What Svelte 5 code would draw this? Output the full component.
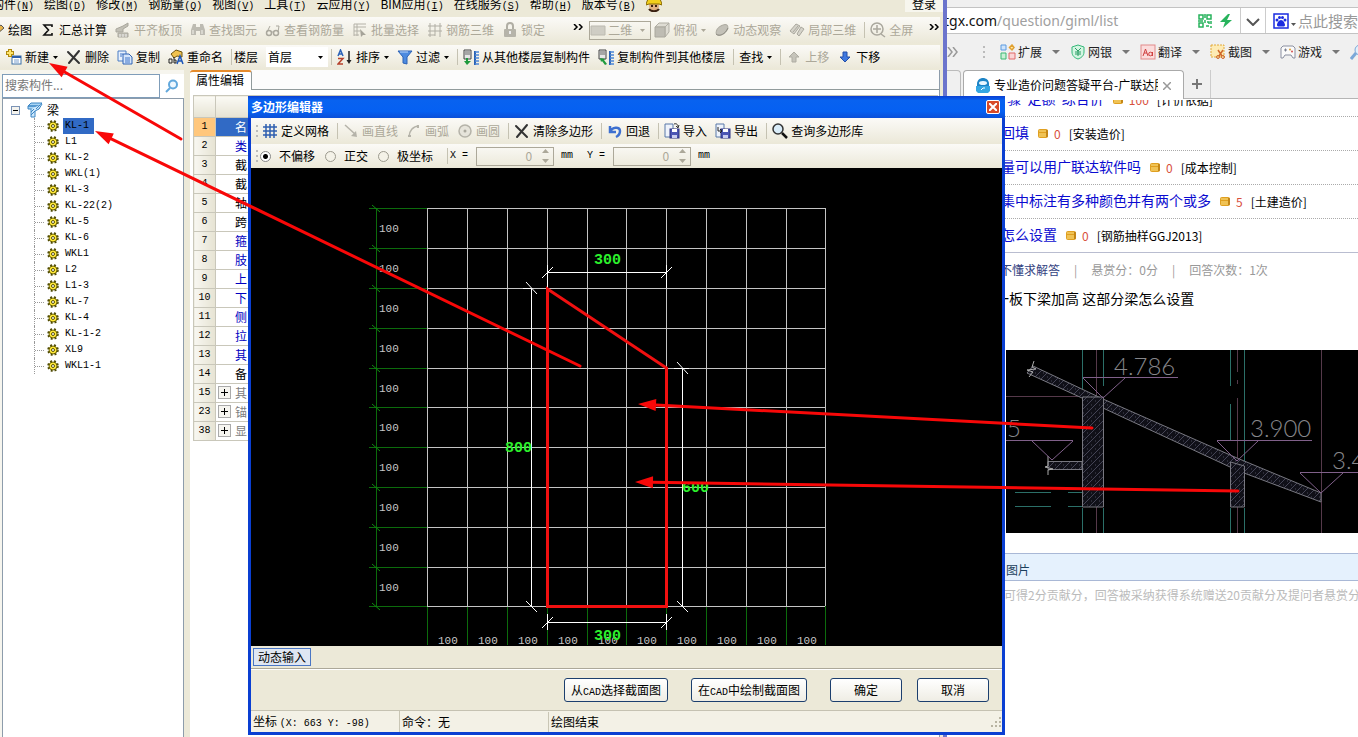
<script>
	const menus = [
		['构件', 'N'],
		['绘图', 'D'],
		['修改', 'M'],
		['钢筋量', 'Q'],
		['视图', 'V'],
		['工具', 'T'],
		['云应用', 'Y'],
		['BIM应用', 'I'],
		['在线服务', 'S'],
		['帮助', 'H'],
		['版本号', 'B']
	];

	const drawTools = [
		{ icon: 'pencil', label: '绘图' },
		{ icon: 'sigma', label: '汇总计算' },
		{ icon: 'align', label: '平齐板顶', disabled: true },
		{ icon: 'binoculars', label: '查找图元', disabled: true },
		{ icon: 'glasses', label: '查看钢筋量', disabled: true },
		{ icon: 'batch', label: '批量选择', disabled: true },
		{ icon: 'rebar', label: '钢筋三维', disabled: true },
		{ icon: 'lock', label: '锁定', disabled: true }
	];

	const viewTools = [
		{ icon: 'cube', label: '俯视', disabled: true, menu: true },
		{ icon: 'orbit', label: '动态观察', disabled: true },
		{ icon: 'local', label: '局部三维', disabled: true },
		{ sep: true },
		{ icon: 'full', label: '全屏', disabled: true }
	];

	const editTools = [
		{ icon: 'new', label: '新建', menu: true },
		{ icon: 'cross', label: '删除' },
		{ icon: 'copy', label: '复制' },
		{ icon: 'rename', label: '重命名' }
	];

	const partTools = [
		{ sep: true },
		{ icon: 'sort', label: '排序', menu: true },
		{ icon: 'funnel', label: '过滤', menu: true },
		{ sep: true },
		{ icon: 'floorIn', label: '从其他楼层复制构件' },
		{ icon: 'floorOut', label: '复制构件到其他楼层' },
		{ sep: true },
		{ label: '查找', menu: true },
		{ sep: true },
		{ icon: 'up', label: '上移', disabled: true },
		{ icon: 'down', label: '下移' }
	];

	const polygonTools = [
		{ icon: 'mesh', label: '定义网格' },
		{ sep: true },
		{ icon: 'line', label: '画直线', disabled: true },
		{ icon: 'arc', label: '画弧', disabled: true },
		{ icon: 'circle', label: '画圆', disabled: true },
		{ sep: true },
		{ icon: 'cross', label: '清除多边形' },
		{ sep: true },
		{ icon: 'undo', label: '回退' },
		{ sep: true },
		{ icon: 'import', label: '导入' },
		{ icon: 'export', label: '导出' },
		{ sep: true },
		{ icon: 'magnifier', label: '查询多边形库' }
	];

	const beams = ['KL-1', 'L1', 'KL-2', 'WKL(1)', 'KL-3', 'KL-22(2)', 'KL-5', 'KL-6', 'WKL1', 'L2', 'L1-3', 'KL-7', 'KL-4', 'KL-1-2', 'XL9', 'WKL1-1'];

	const properties = [
		[1, '名', 'current'],
		[2, '类', 'blue'],
		[3, '截', ''],
		[4, '截', ''],
		[5, '轴', ''],
		[6, '跨', ''],
		[7, '箍', 'blue'],
		[8, '肢', 'blue'],
		[9, '上', 'blue'],
		[10, '下', 'blue'],
		[11, '侧', 'blue'],
		[12, '拉', 'blue'],
		[13, '其', 'blue'],
		[14, '备', ''],
		[15, '其', 'group'],
		[23, '锚', 'group'],
		[38, '显', 'group']
	];

	const bookmarks = [
		['ext', '扩展'],
		['bank', '网银'],
		['translate', '翻译'],
		['shot', '截图'],
		['game', '游戏']
	];

	const questions = [
		['\u00a0\u00a0骤\u00a0 定额\u00a0 综合价', 100, '计价依据'],
		['回填', 0, '安装造价'],
		['量可以用广联达软件吗', 0, '成本控制'],
		['集中标注有多种颜色并有两个或多', 5, '土建造价'],
		['怎么设置', 0, '钢筋抽样GGJ2013']
	];

	// polygon grid, 10 x 10 cells
	const steps = [...Array(11).keys()];
	const cells = steps.slice(0, 10);
	const gx = (i) => Math.round(176.4 + i * 39.8);
	const gy = (i) => Math.round(40.4 + i * 39.8);

	const arrows = [
		[181, 139, 49, 63],
		[580, 366, 95, 131],
		[1092, 428, 638, 404],
		[1238, 491, 635, 482]
	].map(([x1, y1, x2, y2]) => {
		const len = Math.hypot(x2 - x1, y2 - y1);
		const ux = (x2 - x1) / len;
		const uy = (y2 - y1) / len;
		const bx = x2 - ux * 18;
		const by = y2 - uy * 18;
		return { x1, y1, bx, by, head: `${x2},${y2} ${bx - uy * 6},${by + ux * 6} ${bx + uy * 6},${by - ux * 6}` };
	});

	let mode = 'none';
</script>

{#snippet icon(name)}
	<svg class="icon" width="16" height="16" viewBox="0 0 16 16" fill="none" aria-hidden="true">
		{#if name === 'pencil'}
			<path d="M3 13l2-5 7-5 3 3-7 6z" fill="#e8b54a" stroke="#555" /><path d="M3 13l2-5 3 4z" fill="#333" />
		{:else if name === 'sigma'}
			<path d="M12 5V3H4l4.500 5L4 13h8v-2" stroke="#111" stroke-width="1.600" />
		{:else if name === 'align'}
			<path d="M1 7l7-3 5-3v3l-5 3v3H1zM3 11h10v4H3z" fill="#c2c0b6" stroke="#a9a79d" /><path d="M5 12v3M8 12v3M11 12v3" stroke="#eee" />
		{:else if name === 'binoculars'}
			<path d="M3 2h3v3h4V2h3l2 6v5h-5V9H6v4H1V8z" fill="#bdbbb2" /><path d="M3 8v4M12 8v4" stroke="#f4f3ec" />
		{:else if name === 'glasses'}
			<circle cx="4" cy="11" r="2.500" stroke="#aaa89e" stroke-width="1.500" /><circle cx="11" cy="11" r="2.500" stroke="#aaa89e" stroke-width="1.500" /><path d="M2 10l3-6M13 10l1-6h-3M6 10h3" stroke="#aaa89e" />
		{:else if name === 'batch'}
			<path d="M2 2h12M2 5h12M2 9h6M2 13h5M2 2v12M5 2v12" stroke="#b4b2a8" /><path d="M8 7l6 6-3 0-2 2z" fill="#a5a399" />
		{:else if name === 'rebar'}
			<path d="M3 1v14M8 2v12M13 1v14M1 4h14M1 9h14M1 13h7" stroke="#b0aea4" />
		{:else if name === 'lock'}
			<path d="M5 7V4a3 3 0 0 1 6 0v3" stroke="#b0aea4" stroke-width="2" /><rect x="2" y="7" width="12" height="8" rx="1" fill="#b6b4aa" /><path d="M8 9v3" stroke="#eee" stroke-width="2" />
		{:else if name === 'plane'}
			<path d="M1 4h14v9H1z" fill="#cfcdc4" stroke="#bcbab0" />
		{:else if name === 'cube'}
			<path d="M1 5l4-4h10l-4 4zM11 5l4-4v9l-4 5z" fill="#dedcd3" stroke="#b0aea4" /><path d="M1 5h10v10H1z" fill="#bebcb3" stroke="#aaa89e" />
		{:else if name === 'orbit'}
			<ellipse cx="8" cy="8" rx="7" ry="4" transform="rotate(-40 8 8)" fill="#c3c1b8" stroke="#aeaca2" /><path d="M2 12c4 3 9 0 12-6" stroke="#8f8d84" />
		{:else if name === 'local'}
			<path d="M1 9l6-7 4 2-6 8zM8 12l4-7 3 2-5 7z" fill="#d5d3ca" stroke="#aaa89e" /><path d="M4 10l5-6" stroke="#aaa89e" />
		{:else if name === 'full'}
			<circle cx="7" cy="7" r="6" stroke="#aaa89e" stroke-width="1.500" /><path d="M7 3v8M3 7h8M11 12l4 3" stroke="#aaa89e" stroke-width="1.500" />
		{:else if name === 'new'}
			<rect x="6" y="7" width="9" height="8" fill="#fff" stroke="#3a6ea5" /><path d="M6 8h9" stroke="#2d5fae" stroke-width="2" /><path d="M8 11h5M8 13h5" stroke="#7aa0cf" /><path d="M4 0v8M0 4h8" stroke="#b08a10" stroke-width="4" /><path d="M4 1v6M1 4h6" stroke="#ffe46b" stroke-width="2" />
		{:else if name === 'cross'}
			<path d="M2 3l11 11M13 2L3 14" stroke="#333" stroke-width="2" stroke-linecap="round" />
		{:else if name === 'copy'}
			<path d="M1 2h8v10H1z" fill="#e8f1fd" stroke="#4a7cc4" /><path d="M6 5h6l3 3v7H6z" fill="#d5e5fb" stroke="#2f62b4" /><path d="M3 5h3M3 7h2M8 9h5M8 11h5M8 13h5" stroke="#3f74c8" />
		{:else if name === 'rename'}
			<path d="M3 5l5-4 6 2v5L9 7l-3 2z" fill="#f0c24f" stroke="#6d5410" /><path d="M1 10h3v4H1zM6 8v6M6 11h2v3H6" stroke="#222" /><path d="M9 15l3-8 3 8M10 12h4" stroke="#1d56b8" stroke-width="1.500" />
		{:else if name === 'sort'}
			<path d="M1 7l2.500-6L6 7M2 5h3" stroke="#2c63b8" stroke-width="1.500" /><path d="M1 9.500h5L1 15h5" stroke="#b5412c" stroke-width="1.500" /><path d="M12 2v11" stroke="#222" stroke-width="1.500" /><path d="M9.500 11h5L12 15z" fill="#222" />
		{:else if name === 'funnel'}
			<path d="M1 2h14L10 8v7l-4-1V8z" fill="#4d8be0" stroke="#2c62b5" /><path d="M3 3h8" stroke="#bcd7fa" />
		{:else if name === 'floorIn' || name === 'floorOut'}
			<path d="M1 1h7v9H1z" fill="#e6e6e6" stroke="#444" /><path d="M2 3h5M2 5h5" stroke="#666" />
			<path d="M12 2v14" stroke="#2a62b4" stroke-width="2" /><path d="M12 3h4M12 6h4M12 9h4M12 12h4M12 15h4" stroke="#4c86d6" stroke-width="1.500" />
			{#if name === 'floorIn'}
				<path d="M5 9v3h3l-4 4-3-4h2V9z" fill="#1f9a3c" />
			{:else}
				<path d="M2 9l5 1-1 1 3 4-2 1-3-4-1 1z" fill="#1f9a3c" />
			{/if}
		{:else if name === 'up'}
			<path d="M8 3l5 5h-3v5H6V8H3z" fill="#c6c4ba" stroke="#aeaca2" />
		{:else if name === 'down'}
			<path d="M8 13l5-5h-3V3H6v5H3z" fill="#3f79e0" stroke="#244fa8" />
		{:else if name === 'mesh'}
			<path d="M4 1v14M8 1v14M12 1v14M1 4h14M1 8h14M1 12h14" stroke="#2f5fb0" stroke-width="1.500" />
		{:else if name === 'line'}
			<path d="M2 2l10 9" stroke="#b5b3a9" stroke-width="1.500" /><path d="M14 14l-6-1 5-5z" fill="#b5b3a9" />
		{:else if name === 'arc'}
			<path d="M3 14C3 8 7 3 13 3" stroke="#b5b3a9" stroke-width="1.500" /><path d="M2 13h3M12 2v3" stroke="#b5b3a9" stroke-width="2" />
		{:else if name === 'circle'}
			<circle cx="8" cy="8" r="6" fill="#e6e4db" stroke="#b5b3a9" stroke-width="1.500" /><circle cx="8" cy="8" r="1.500" fill="#aaa89e" />
		{:else if name === 'undo'}
			<path d="M3 3v6h6M3 9c2-5 10-6 10-1 0 3-2 5-4 6" stroke="#3e70d0" stroke-width="2.500" />
		{:else if name === 'import' || name === 'export'}
			<path d="M1 1h8v13H1z" fill="#eef3fb" stroke="#5878a8" />
			<rect x="6" y="6" width="9" height="9" fill="#4b55b4" stroke="#2c3382" /><path d="M8 6h5v3H8z" fill="#fff" /><path d="M8 12h5v3H8z" fill="#c9cdf0" />
			{#if name === 'import'}
				<path d="M10 1c3-1 4 1 4 3M12 3l2 2 1-3" stroke="#333" />
			{:else}
				<path d="M3 4v4h4M5 6l2 2-2 2" stroke="#222" />
			{/if}
		{:else if name === 'magnifier'}
			<circle cx="6" cy="6" r="5" fill="#d9ecf8" stroke="#333" stroke-width="1.500" /><path d="M10 10l5 5" stroke="#111" stroke-width="2.500" />
		{:else if name === 'beam'}
			<path d="M1 4l3-3h11l-3 3zM1 4h11v3H1z" fill="#a9d5f5" stroke="#3c86c4" /><path d="M4 7v8h4V9l4-2 3-5" fill="#cfe8fb" stroke="#3c86c4" /><path d="M4 13l4-4M4 10l3-3M9 7l4-4" stroke="#3c86c4" />
		{:else if name === 'gear'}
			<circle cx="8" cy="8" r="4" fill="#ffe838" stroke="#6b6200" /><circle cx="8" cy="8" r="5" stroke="#4d4800" stroke-width="1.500" stroke-dasharray="2 2" /><circle cx="8" cy="8" r="1.500" fill="#fff" stroke="#5a5300" />
		{:else if name === 'ext'}
			<path d="M1 1h5v5H1z" fill="#cfe4fb" stroke="#5a9ae0" /><path d="M1 9h5v6H1z" fill="#c9f0d6" stroke="#3db873" /><path d="M9 9h6v6H9z" fill="#fbd5d5" stroke="#e06a6a" /><path d="M12 1l2 2.500L12 6 9.500 3.500z" fill="#ffe9a8" stroke="#e0a030" stroke-width="1.500" />
		{:else if name === 'bank'}
			<path d="M8 1l6 2v5c0 4-3 6-6 7-3-1-6-3-6-7V3z" fill="#d3f5e2" stroke="#34b878" /><path d="M5 4l3 3 3-3M5 8h6M5 10h6M8 7v5" stroke="#2b9c64" />
		{:else if name === 'translate'}
			<rect x="1" y="1" width="14" height="14" fill="#fbdcdc" stroke="#e28a8a" /><path d="M3 12l2.500-7L8 12M4 9h3" stroke="#cf4040" /><circle cx="10.500" cy="10" r="1.800" stroke="#cf4040" /><path d="M12.500 8v4" stroke="#cf4040" />
		{:else if name === 'shot'}
			<rect x="1" y="1" width="13" height="12" fill="#fdebb5" stroke="#e2a93a" stroke-dasharray="2 1" /><path d="M8 6l4 6M13 6l-4 6" stroke="#d0682a" stroke-width="1.500" /><circle cx="8" cy="13" r="1.500" stroke="#d0682a" /><circle cx="13" cy="13" r="1.500" stroke="#d0682a" />
		{:else if name === 'game'}
			<path d="M3 2h10l2 2v10h-2l-2-3H5l-2 3H1V4z" fill="#fafafa" stroke="#8a8fa0" /><path d="M4 6h3M5.500 4.500v3" stroke="#7a7f90" /><circle cx="10" cy="5.500" r="1" fill="#e0a030" /><circle cx="12" cy="7.500" r="1" fill="#d65050" />
		{/if}
	</svg>
{/snippet}

{#snippet caret()}
	<svg class="caret" width="5" height="3" viewBox="0 0 5 3" aria-hidden="true"><path d="M0 0h5L2.500 3z" fill="currentColor" /></svg>
{/snippet}

{#snippet tools(list)}
	{#each list as tool}
		{#if tool.sep}
			<span class="sep"></span>
		{:else}
			<button class="tool" disabled={tool.disabled}>
				{#if tool.icon}{@render icon(tool.icon)}{/if}
				<span>{tool.label}</span>
				{#if tool.menu}{@render caret()}{/if}
			</button>
		{/if}
	{/each}
{/snippet}

<div class="desktop">
	<main class="app">
		<nav class="menubar">
			{#each menus as [name, key]}
				<button>{name}<span class="key">(<u>{key}</u>)</span></button>
			{/each}
			<svg width="16" height="14" viewBox="0 0 16 14" aria-hidden="true">
				<circle cx="8" cy="8" r="5" fill="#e2b080" />
				<path d="M0 7C1 1 4-2 8-2s7 3 8 9l-3-1H3z" fill="#f2cf1c" stroke="#8a6a00" />
				<path d="M5 8h2M9 8h2M3 11c2 3 8 3 10 0" stroke="#3a2010" stroke-width="2" fill="none" />
			</svg>
			<button class="login">登录</button>
		</nav>

		<div class="toolbar draw">
			{@render tools(drawTools)}
			<button class="more" aria-label="更多绘图工具"><svg width="10" height="6" viewBox="0 0 10 6"><path d="M1 0l3 3-3 3M6 0l3 3-3 3" stroke="#000" stroke-width="1.500" fill="none" /></svg></button>
			<span class="combo view">
				{@render icon('plane')}
				<select disabled aria-label="视图"><option>二维</option></select>
				{@render caret()}
			</span>
			{@render tools(viewTools)}
			<button class="more" aria-label="更多视图工具"><svg width="10" height="6" viewBox="0 0 10 6"><path d="M1 0l3 3-3 3M6 0l3 3-3 3" stroke="#000" stroke-width="1.500" fill="none" /></svg></button>
		</div>

		<div class="toolbar edit">
			{@render tools(editTools)}
			<span class="sep tight"></span>
			<label for="floor">楼层</label>
			<span class="combo floor">
				<select id="floor"><option>首层</option></select>
				{@render caret()}
			</span>
			{@render tools(partTools)}
		</div>

		<div class="workspace">
			<aside class="parts">
				<div class="search">
					<input type="text" placeholder="搜索构件..." aria-label="搜索构件" />
					<button aria-label="搜索">
						<svg width="14" height="14" viewBox="0 0 14 14"><circle cx="8" cy="5.500" r="4" fill="#eef7fe" stroke="#62a8dc" stroke-width="2" /><path d="M5 9l-4 4" stroke="#62a8dc" stroke-width="2" /></svg>
					</button>
				</div>
				<div class="tree">
					<div class="root">
						<svg class="toggle" width="9" height="9" viewBox="0 0 9 9"><rect x=".5" y=".5" width="8" height="8" fill="#f4f3ee" stroke="#7b93b5" /><path d="M2 4.500h5" stroke="#000" /></svg>
						{@render icon('beam')}
						<span>梁</span>
					</div>
					<ul>
						{#each beams as beam, i}
							<li>
								{@render icon('gear')}
								<span class="beam" class:selected={i === 0}>{beam}</span>
							</li>
						{/each}
					</ul>
				</div>
			</aside>

			<section class="props">
				<div class="tabs"><button>属性编辑</button></div>
				<table>
					<thead>
						<tr><th></th><th></th></tr>
					</thead>
					<tbody>
						{#each properties as [n, name, kind]}
							<tr class={kind}>
								<th>{n}</th>
								<td>
									{#if kind === 'group'}
										<button class="plus" aria-label="展开"><svg width="13" height="13" viewBox="0 0 13 13"><rect x=".5" y=".5" width="12" height="12" fill="#f6f5f0" stroke="#aaa" /><path d="M3 6.500h7M6.500 3v7" stroke="#000" /></svg></button>
									{/if}
									<span>{name}</span>
								</td>
							</tr>
						{/each}
					</tbody>
				</table>
			</section>
		</div>
	</main>

	<section class="browser">
		<div class="address">
			<a href="/question/giml/list"><b>tgx.com</b>/question/giml/list</a>
			<svg width="14" height="14" viewBox="0 0 14 14" aria-hidden="true">
				<path d="M1 1h4v4H1zM9 1h4v4H9zM1 9h4v4H1z" fill="none" stroke="#27b35c" stroke-width="1.500" /><path d="M7 0v4M7 6v3M9 8h2v2M13 7v3M8 12h3M12 13h2M0 7h5" stroke="#27b35c" stroke-width="1.500" fill="none" />
			</svg>
			<svg width="14" height="14" viewBox="0 0 14 14" aria-hidden="true"><path d="M9 0L1 8h5l-2 6 9-8H8l3-6z" fill="#27b35c" /></svg>
			<button class="drop" aria-label="历史">
				<svg width="14" height="8" viewBox="0 0 14 8"><path d="M1 1l6 6 6-6" fill="none" stroke="#555" stroke-width="2" /></svg>
			</button>
			<svg width="16" height="16" viewBox="0 0 16 16" aria-hidden="true">
				<rect x="1" y="1" width="14" height="14" fill="#fff" stroke="#1a2be0" stroke-width="1.500" />
				<g fill="#1a2be0"><circle cx="4" cy="7" r="1.500" /><circle cx="6.500" cy="4.500" r="1.500" /><circle cx="9.500" cy="4.500" r="1.500" /><circle cx="12" cy="7" r="1.500" /><path d="M8 7c2 0 4 3 4 5s-2 1.500-4 1.500S4 14 4 12s2-5 4-5z" /></g>
			</svg>
			<svg class="pick" width="5" height="3" viewBox="0 0 5 3" aria-hidden="true"><path d="M0 0h5L2.500 3z" fill="#555" /></svg>
			<input type="text" placeholder="点此搜索" aria-label="搜索" />
		</div>
		<div class="bookmarks">
			<svg width="11" height="10" viewBox="0 0 11 10" aria-hidden="true"><path d="M1 0l4 5-4 5M6 0l4 5-4 5" fill="none" stroke="#999" stroke-width="1.500" /></svg>
			<span class="dots"></span>
			{#each bookmarks as [name, label]}
				<button>{@render icon(name)}<span>{label}</span><svg class="tri" width="8" height="4" viewBox="0 0 8 4"><path d="M0 0h8L4 4z" fill="#777" /></svg></button>
			{/each}
			<svg class="brush" width="16" height="16" viewBox="0 0 16 16" aria-hidden="true"><circle cx="10" cy="6" r="5" fill="#e3f0fc" stroke="#7ba8d8" /><path d="M6 9l-5 6" stroke="#7ba8d8" stroke-width="3" /></svg>
		</div>
		<div class="pagetabs">
			<span class="prev"></span>
			<div class="pagetab">
				<svg width="16" height="16" viewBox="0 0 16 16" aria-hidden="true"><path d="M2 7C2-1 14-1 14 7v3H2z" fill="#1d84c6" /><ellipse cx="8" cy="6" rx="4" ry="2" fill="#e8f6ff" /><path d="M1 9h14v5l-2 2H3l-2-2z" fill="#35a6e2" /><path d="M6 13l2-2h2" stroke="#fff" fill="none" /></svg>
				<span class="title">专业造价问题答疑平台-广联达服务新干线</span>
				<button aria-label="关闭标签页"><svg width="8" height="8" viewBox="0 0 8 8"><path d="M0 0l8 8M8 0L0 8" stroke="#999" stroke-width="1.500" /></svg></button>
			</div>
			<button class="add" aria-label="新标签页"><svg width="10" height="10" viewBox="0 0 10 10"><path d="M5 0v10M0 5h10" stroke="#777" stroke-width="2" /></svg></button>
		</div>

		<div class="page">
			<ul class="questions">
				{#each questions as [title, score, tag]}
					<li>
						<a href="#question">{title}</a>
						<svg width="12" height="11" viewBox="0 0 12 11" aria-hidden="true"><rect x="1" y="1" width="10" height="9" rx="2" fill="#e0a021" /><path d="M2 3h7M2 6h7M2 8h7" stroke="#ffe58a" /><path d="M10 2v7" stroke="#a86d0c" /></svg>
						<span class="score">{score}</span>
						<span>[{tag}]</span>
					</li>
				{/each}
			</ul>
			<p class="meta"><a href="#user">不懂求解答</a><span>|</span><span>悬赏分：0分</span><span>|</span><span>回答次数：1次</span></p>
			<p class="subject">一板下梁加高 这部分梁怎么设置</p>

			<svg class="section" role="img" aria-label="梁板剖面图">
				<defs>
					<pattern id="hatch" width="8" height="8" patternUnits="userSpaceOnUse">
						<rect width="8" height="8" fill="#101018" />
						<path d="M-1 9L9-1M1 3h1M5 7h1" stroke="#454556" />
					</pattern>
				</defs>
				<g fill="none" stroke="#2b6f68">
					<path d="M76.500 0v47M97.500 0v36M76.500 158v25M97.500 158v25M224.500 0v36M224.500 54v36M238.500 0v114M224.500 158v25M238.500 158v25" />
					<path d="M9 142.500h36M62 142.500h14M9 156.500h36M62 156.500h14" />
				</g>
				<g fill="none" stroke="#55394a">
					<path d="M90.500 0v183M231.500 0v22M231.500 30v4M231.500 48v135M315.500 0v183M0 46.500h76" />
				</g>
				<path d="M27 16L97 49 231 108 315 143V152L238 123 224 117 97 58 76 48 21 23z" fill="url(#hatch)" stroke="#77777f" />
				<path d="M76.500 47H97.500V157H76.500zM224.500 112L238.500 116V157H224.500zM42 111.500h34v8H42z" fill="url(#hatch)" stroke="#77777f" />
				<path d="M28 11l-2 6 4 2-9 1 6 2-4 5M42 106v10l-3 1 8 2-5 1v5" fill="none" stroke="#aaa" />
				<path d="M77 27.500h95M77 28L97 48 119 28M211 90.500h95M211 91L231 111 252 91M294 122.500h90M294 123L315 143 337 123M0 90.500h67M26 91L46 110 67 91" fill="none" stroke="#80608a" />
				<text x="108" y="25">4.786</text>
				<text x="244" y="87">3.900</text>
				<text x="326" y="119">3.4</text>
				<text x="1" y="87">5</text>
			</svg>

			<div class="upload">图片</div>
			<p class="hint">可得2分贡献分，回答被采纳获得系统赠送20贡献分及提问者悬赏分</p>
		</div>
	</section>

	<section class="dialog" role="dialog" aria-label="多边形编辑器">
		<header>
			<h1>多边形编辑器</h1>
			<button class="close" aria-label="关闭"><svg width="8" height="8" viewBox="0 0 8 8"><path d="M0 0l8 8M8 0L0 8" stroke="#fff" stroke-width="2" /></svg></button>
		</header>
		<div class="toolbar polygon"><span class="dots"></span>{@render tools(polygonTools)}</div>
		<div class="toolbar offset">
			<span class="dots"></span>
			<label class="radio"><input type="radio" value="none" bind:group={mode} />不偏移</label>
			<label class="radio"><input type="radio" value="ortho" bind:group={mode} />正交</label>
			<label class="radio"><input type="radio" value="polar" bind:group={mode} />极坐标</label>
			<span class="sep"></span>
			{#each ['X', 'Y'] as axis}
				<label class="axis" for="off{axis}">{axis} =</label>
				<span class="number">
					<input id="off{axis}" type="text" value="0" disabled />
					<svg width="7" height="14" viewBox="0 0 7 14" aria-hidden="true"><path d="M0 4h7L3.500 0zM0 10h7l-3.500 4z" fill="#aca899" /></svg>
				</span>
				<span class="unit">mm</span>
			{/each}
		</div>

		<svg class="canvas" role="img" aria-label="多边形截面">
			<g shape-rendering="crispEdges">
				<g stroke="#0c6b0c">
					<path d="M125.500 40V439" />
					{#each steps as i}
						<path d="M118 {gy(i) + 0.5}H176M{gx(i) + 0.5} {gy(10)}V477" />
					{/each}
				</g>
				<g stroke="#c4c4c4">
					{#each steps as i}
						<path d="M{gx(0)} {gy(i) + 0.5}H{gx(10)}M{gx(i) + 0.5} {gy(0)}V{gy(10)}" />
					{/each}
				</g>
				<path d="M296.500 97V120M296 104.500H416M415.500 97V120M280.500 120V438M431.500 200V438M272 120.500h8M423 200.500h15M296.500 446V462M415.500 446V462M296 454.500H416" stroke="#fff" fill="none" />
			</g>
			{#each steps as i}
				<path d="M121 {gy(i) - 3}l8 7" stroke="#0f8a0f" />
			{/each}
			<path d="M291 110l11-11M410 110l11-11M275 114l11 12M426 194l11 12M275 433l11 11M426 433l11 11M291 460l11-11M410 460l11-11" stroke="#fff" fill="none" />
			<g class="ruler">
				{#each cells as i}
					<text x="128" y={gy(i) + 24}>100</text>
					<text x={gx(i) + 11} y="476">100</text>
				{/each}
			</g>
			<g class="dim">
				<text x="343" y="96">300</text>
				<text x="254" y="284">800</text>
				<text x="431" y="324">600</text>
				<text x="343" y="472">300</text>
			</g>
			<path d="M296.500 121L415.500 200V438.500H296.500z" fill="none" stroke="#f01010" stroke-width="3" />
		</svg>

		<div class="dynamic"><button>动态输入</button></div>
		<footer>
			<button>从<span class="mono">CAD</span>选择截面图</button>
			<button>在<span class="mono">CAD</span>中绘制截面图</button>
			<button class="ok">确定</button>
			<button class="cancel">取消</button>
		</footer>
		<div class="status">
			<span class="coords">坐标 <span class="mono">(X: 663 Y: -98)</span></span>
			<span class="command">命令：无</span>
			<span class="state">绘图结束</span>
			<svg width="12" height="12" viewBox="0 0 12 12" aria-hidden="true"><path d="M9 1h2v2H9zM5 5h2v2H5zM9 5h2v2H9zM1 9h2v2H1zM5 9h2v2H5zM9 9h2v2H9z" fill="#b8b4a2" /></svg>
		</div>
	</section>

	<svg class="notes" aria-hidden="true">
		{#each arrows as a}
			<line x1={a.x1} y1={a.y1} x2={a.bx} y2={a.by} stroke="#f80808" stroke-width="3" stroke-linecap="round" />
			<polygon points={a.head} fill="#f80808" />
		{/each}
	</svg>
</div>

<style>
	:global(body) {
		margin: 0;
	}

	.desktop {
		position: relative;
		display: flex;
		min-height: 100vh;
		overflow: hidden;
		font: 12px/16px 'Noto Sans CJK SC', sans-serif;
		color: #000;
		background: #fff;
	}

	button,
	input,
	select {
		margin: 0;
		padding: 0;
		border: 0;
		background: none;
		font: inherit;
		color: inherit;
		white-space: nowrap;
	}

	select {
		appearance: none;
	}

	svg {
		flex: none;
	}

	ul,
	p,
	h1 {
		margin: 0;
		padding: 0;
		list-style: none;
	}

	a {
		text-decoration: none;
	}

	/* main window */
	.app {
		flex: 0 0 943px;
		display: flex;
		flex-direction: column;
		border-right: 4px solid #6b74cc;
		background: #ece9d8;
		overflow: hidden;
	}

	.menubar {
		display: flex;
		align-items: flex-start;
		gap: 10px;
		height: 21px;
		margin: -4px 0 0 -8px;
	}

	.menubar svg {
		margin-top: 2px;
	}

	.key {
		font: 10px/12px 'Liberation Mono', monospace;
	}

	.login {
		margin-left: auto;
		padding: 0 7px;
		background: #f7f6ee;
	}

	.toolbar {
		display: flex;
		align-items: center;
		margin-right: 3px;
		background: linear-gradient(#fbfaf7, #ebe8d8);
		white-space: nowrap;
	}

	.draw {
		height: 26px;
		margin-bottom: 2px;
	}

	.draw > :global(:first-child) {
		margin-left: -11px;
	}

	.edit {
		height: 24px;
		padding-left: 6px;
	}

	.tool {
		display: flex;
		align-items: center;
		gap: 3px;
		padding-right: 8px;
	}

	.tool:disabled {
		color: #aca899;
	}

	.tool .caret {
		margin-left: 1px;
	}

	.sep {
		flex: none;
		width: 1px;
		height: 16px;
		margin-right: 5px;
		background: #c5c2b2;
	}

	.tight {
		margin-right: 2px;
	}

	.more {
		display: flex;
		height: 16px;
		margin-left: 8px;
		padding-top: 2px;
	}

	.more:not(:last-child) {
		margin-left: 20px;
	}

	.combo {
		position: relative;
		flex: none;
		display: flex;
		align-items: center;
		width: 62px;
	}

	.combo select {
		flex: 1;
		padding-left: 2px;
		color: inherit;
		opacity: 1;
	}

	.combo .caret {
		position: absolute;
		right: 5px;
	}

	.view {
		box-sizing: border-box;
		height: 19px;
		margin: 0 3px 0 6px;
		border: 1px solid #aca899;
		color: #aca899;
	}

	.floor {
		height: 20px;
		margin: 0 3px 0 8px;
		background: #fff;
	}

	.workspace {
		flex: 1;
		display: flex;
		margin-top: 1px;
	}

	.parts {
		display: flex;
		flex-direction: column;
		width: 182px;
		padding: 4px 0 0 2px;
		background: #f6f5ee;
	}

	.search {
		display: flex;
		height: 24px;
	}

	.search input {
		box-sizing: border-box;
		width: 158px;
		border: 1px solid #7f9db9;
		padding: 0 0 3px 2px;
		background: #fff;
	}

	.search input::placeholder {
		color: #777;
		opacity: 1;
	}

	.search button {
		flex: 1;
		display: grid;
		place-items: center;
		background: #fff;
	}

	.tree {
		flex: 1;
		padding: 3px 0 0 8px;
		border: 1px solid #8d9cab;
		border-width: 1px 1px 0;
		background: #fff;
	}

	.root {
		display: flex;
		align-items: center;
		height: 16px;
	}

	.root .icon {
		margin: 0 4px 0 7px;
	}

	.tree ul {
		margin-left: 23px;
	}

	.tree li {
		display: flex;
		align-items: center;
		height: 16px;
		border-left: 1px dotted #999;
	}

	.tree li::before {
		content: '';
		width: 9px;
		margin-right: 1px;
		border-top: 1px dotted #999;
	}

	.beam {
		margin-left: 2px;
		padding: 0 2px;
		font: 10px/16px 'Liberation Mono', monospace;
	}

	.selected {
		padding-right: 5px;
		background: #316ac5;
	}

	.props {
		flex: 1;
		margin: 0 3px 0 6px;
		background: #fff;
		border-right: 1px solid #8d9cab;
	}

	.tabs {
		height: 19px;
		border-bottom: 1px solid #919b9c;
		background: #fcfcfc;
	}

	.tabs button {
		height: 20px;
		padding: 0 7px 2px 6px;
		border: 1px solid #919b9c;
		border-width: 2px 1px 0 0;
		border-top-color: #e68b2c;
		border-radius: 3px 3px 0 0;
		background: #fff;
		line-height: 16px;
	}

	table {
		width: calc(100% - 4px);
		margin: 5px 0 0 3px;
		border-collapse: collapse;
		table-layout: fixed;
		border: 1px solid #b5b5a8;
	}

	th,
	td {
		box-sizing: border-box;
		height: 19px;
		padding: 0;
		border: 1px solid #c9c7ba;
		line-height: 16px;
		font-weight: normal;
	}

	thead th {
		height: 22px;
		background: linear-gradient(#fbfaf5, #e6e3d3);
	}

	th:first-child {
		width: 22px;
	}

	tbody th {
		background: linear-gradient(90deg, #f8f7f1, #e6e3d3);
		font-family: 'Liberation Mono', monospace;
		font-size: 10px;
	}

	td {
		position: relative;
	}

	td span {
		padding-left: 19px;
	}

	.plus {
		position: absolute;
		left: 2px;
		top: 2px;
		display: flex;
	}

	.blue td {
		color: #0000c0;
	}

	.group td {
		color: #808080;
	}

	.current th {
		background: #ffc77d;
	}

	.current td {
		background: #316ac5;
		color: #fff;
	}

	/* browser window */
	.browser {
		flex: 1;
		display: flex;
		flex-direction: column;
		min-width: 0;
		background: #f0f0f0;
		overflow: hidden;
	}

	.address {
		display: flex;
		align-items: center;
		gap: 7px;
		height: 25px;
		margin-top: 7px;
		border: 1px solid #c3c3c3;
		border-width: 1px 0;
		background: #fff;
	}

	.address a {
		flex: 1;
		margin-left: -3px;
		font: 14px/20px 'Noto Sans', sans-serif;
		color: #a0a0a0;
	}

	.address b {
		font-weight: normal;
		color: #111;
	}

	.drop {
		align-self: stretch;
		width: 26px;
		border: 1px solid #ccc;
		border-width: 0 1px;
	}

	.pick {
		margin: 8px -5px 0;
	}

	.address input {
		width: 60px;
		font-size: 15px;
	}

	.address input::placeholder {
		color: #999;
		opacity: 1;
	}

	.bookmarks {
		display: flex;
		align-items: center;
		height: 36px;
		white-space: nowrap;
	}

	.bookmarks button {
		flex: none;
		display: flex;
		align-items: center;
		width: 70px;
		color: #222;
	}

	.bookmarks button span {
		margin: 0 10px 0 2px;
	}

	.dots {
		flex: none;
		width: 2px;
		height: 13px;
		background: repeating-linear-gradient(#bbb 0 2px, transparent 2px 5px);
	}

	.bookmarks .dots {
		margin: 0 15px 0 25px;
	}

	.pagetabs {
		display: flex;
		align-items: stretch;
		height: 28px;
		border-bottom: 1px solid #b5b5b5;
	}

	.prev {
		width: 13px;
		margin-right: 2px;
		border: 1px solid #bbb;
		border-width: 1px 1px 0 0;
		border-radius: 0 4px 0 0;
	}

	.pagetab {
		display: flex;
		align-items: center;
		width: 208px;
		margin-bottom: -1px;
		padding-left: 11px;
		border: 1px solid #aaa;
		border-bottom: 0;
		border-radius: 4px 4px 0 0;
		background: #fff;
	}

	.title {
		width: 164px;
		margin: 0 5px 0 3px;
		overflow: hidden;
		white-space: nowrap;
	}

	.add {
		width: 27px;
		border-right: 1px solid #ccc;
	}

	.page {
		flex: 1;
		background: #fff;
	}

	.questions {
		margin-top: -17px;
		clip-path: inset(18px 0 0);
		border-bottom: 1px solid #b9bdd0;
	}

	.questions li {
		display: flex;
		align-items: center;
		height: 33px;
		padding-left: 54px;
		border-top: 1px dotted #aaa;
		white-space: nowrap;
	}

	.questions a {
		padding-bottom: 3px;
		font-size: 14px;
		color: #0b0bd0;
	}

	.questions svg {
		margin: 0 5px 0 8px;
	}

	.score {
		margin-right: 8px;
		color: #d8503c;
	}

	.meta {
		display: flex;
		gap: 14px;
		padding: 9px 0 0 53px;
		color: #999;
		white-space: nowrap;
	}

	.meta a {
		color: #34437f;
	}

	.subject {
		padding: 12px 0 0 48px;
		font-size: 14px;
		white-space: nowrap;
	}

	.section {
		display: block;
		width: calc(100% - 59px);
		height: 183px;
		margin: 44px 0 20px 59px;
		background: #000;
	}

	.section text {
		font: 300 24px 'Lato', sans-serif;
		fill: #86868a;
	}

	.upload {
		height: 21px;
		padding: 5px 0 0 59px;
		border: 1px solid #a9b8d6;
		border-width: 1px 0;
		background: #e5f1fd;
		line-height: 22px;
		color: #1c3f5c;
	}

	.hint {
		padding: 6px 0 0 57px;
		color: #bbb;
		white-space: nowrap;
	}

	/* polygon editor */
	.dialog {
		position: absolute;
		top: 96px;
		left: 248px;
		width: 751px;
		border: 3px solid #0a3fd2;
		border-top: 0;
		background: #ece9d8;
	}

	header {
		display: flex;
		align-items: center;
		justify-content: space-between;
		height: 22px;
		margin: 0 -3px;
		padding: 0 5px 0 3px;
		background: linear-gradient(#0a3fd2, #0862f0 20%, #0560f2 70%, #0a4fd8);
	}

	h1 {
		font-size: 12px;
		color: #fff;
	}

	.close {
		display: grid;
		place-items: center;
		width: 14px;
		height: 14px;
		border: 1px solid #fff;
		border-radius: 2px;
		background: #d84a28;
	}

	.dialog .toolbar {
		margin: 0;
		padding-left: 5px;
	}

	.polygon {
		height: 26px;
	}

	.polygon .dots {
		margin-right: 4px;
	}

	.offset {
		height: 24px;
	}

	.radio {
		display: flex;
		align-items: center;
		gap: 8px;
		margin-right: 10px;
	}

	.radio input {
		appearance: none;
		box-sizing: border-box;
		width: 11px;
		height: 11px;
		border: 1px solid #9c9a8e;
		border-radius: 50%;
		background: #f4f2e8;
	}

	.radio input:checked {
		border-color: #888;
		background: radial-gradient(#000 2px, #fff 3px);
	}

	.offset .dots {
		margin-right: 2px;
	}

	.offset .sep {
		margin: 0 2px 0 4px;
	}

	.axis,
	.unit,
	.mono {
		font: 10px/12px 'Liberation Mono', monospace;
	}

	.number {
		display: flex;
		align-items: center;
		width: 72px;
		height: 17px;
		margin: 0 7px 0 8px;
		padding-right: 4px;
		border: 1px solid #aca899;
	}

	.number input {
		flex: 1;
		width: 10px;
		padding-right: 10px;
		text-align: right;
		color: #aca899;
	}

	.unit {
		margin-right: 14px;
	}

	.canvas {
		display: block;
		width: 100%;
		height: 478px;
		background: #000;
	}

	.ruler text {
		font: 11px 'Liberation Mono', monospace;
		fill: #c8c8c8;
	}

	.dim text {
		font: bold 15px 'Liberation Mono', monospace;
		fill: #2cf02c;
	}

	.dynamic {
		padding: 2px;
		border-bottom: 1px solid #aca899;
	}

	.dynamic button {
		display: block;
		padding: 0 4px;
		border: 1px solid #4a76c4;
		background: #dfe6f2;
	}

	footer {
		display: flex;
		justify-content: flex-end;
		padding: 8px 13px;
		border-top: 1px solid #fff;
	}

	footer button {
		height: 24px;
		padding: 0 6px;
		border: 1px solid #1c3f6e;
		border-radius: 3px;
		background: linear-gradient(#fff, #efede4);
	}

	footer button + button {
		margin-left: 23px;
	}

	footer .ok,
	footer .cancel {
		width: 72px;
	}

	footer .cancel {
		margin-left: 15px;
	}

	.status {
		display: flex;
		align-items: center;
		border-top: 1px solid #c5c2b2;
		background: #f3f1e6;
	}

	.status > span {
		padding: 2px;
		border-right: 1px solid #c9c6b5;
	}

	.coords,
	.command {
		width: 144px;
	}

	.status .state {
		flex: 1;
		border: 0;
	}

	.notes {
		position: absolute;
		inset: 0;
		width: 100%;
		height: 100%;
		pointer-events: none;
	}
</style>
